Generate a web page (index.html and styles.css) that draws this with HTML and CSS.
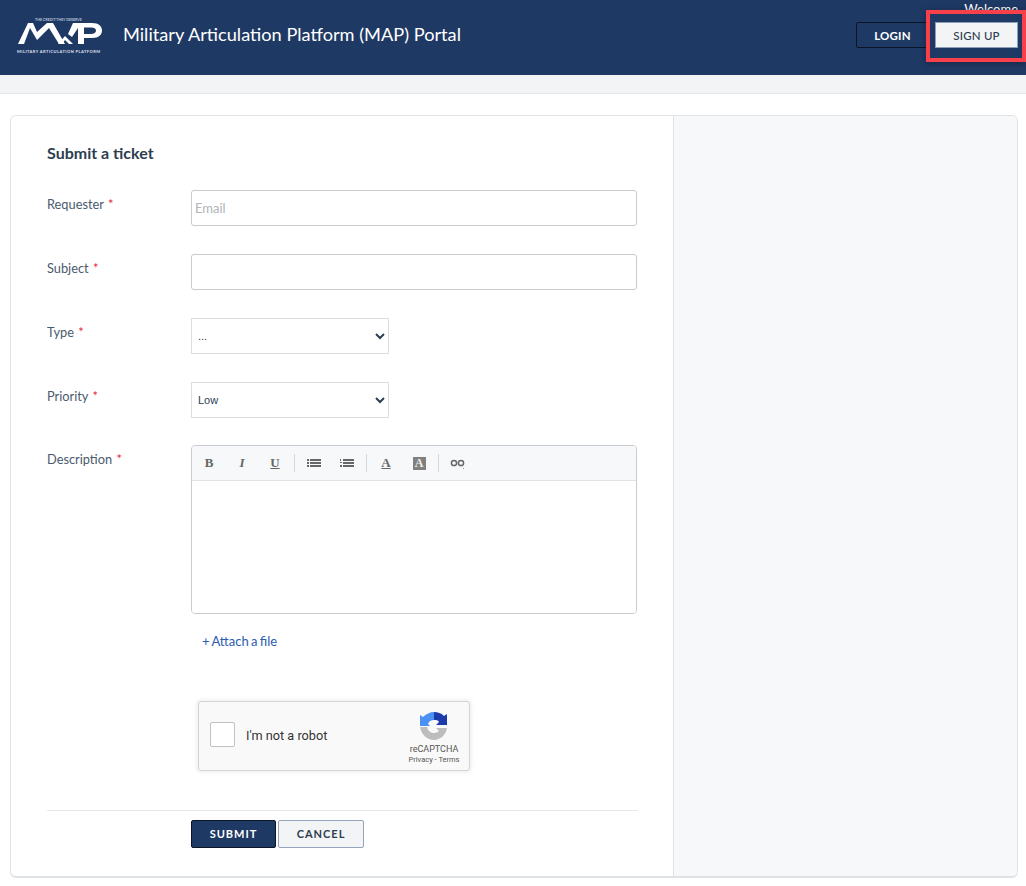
FILE: index.html
```html
<!DOCTYPE html>
<html lang="en">
<head>
    <meta charset="UTF-8">
    <title>Submit a ticket</title>
    <link rel="stylesheet" href="styles.css">
</head>
<body>
    <header class="topbar">
        <div class="brand">
            <div class="logo">
                <span class="logo-top">THE CREDIT THEY DESERVE</span>
                <svg class="logo-mark" width="86" height="24" viewBox="0 0 86 24">
                    <path fill="#fff" d="M0 21 10 0h5l4 9 10-9h6l12 21h-6L31 5 19 17 12 5 6 21z"/>
                    <path fill="#fff" d="M40 21l7-8 8 8h-4l-4-4-3 4z"/>
                    <path fill="#fff" d="M50 11l5-11h5v5l-6 9z"/>
                    <path fill="#fff" fill-rule="evenodd" d="M60 0h14c7 0 10 3.500 10 7.500S81 15 74 15h-8v6h-6zM66 4.500V11h7c3 0 5-1.500 5-3.500S76 4.500 73 4.500z"/>
                </svg>
                <span class="logo-bottom">MILITARY ARTICULATION PLATFORM</span>
            </div>
            <span class="portal-title">Military Articulation Platform (MAP) Portal</span>
        </div>
        <div class="auth">
            <span class="welcome">Welcome</span>
            <a class="btn-login">LOGIN</a>
            <a class="btn-signup">SIGN UP</a>
        </div>
        <div class="highlight"></div>
    </header>
    <div class="strip"></div>

    <main class="page">
        <div class="card">
            <form class="ticket-form">
                <h1>Submit a ticket</h1>

                <div class="row">
                    <label>Requester <span class="req">*</span></label>
                    <input class="field" type="text" placeholder="Email">
                </div>
                <div class="row">
                    <label>Subject <span class="req">*</span></label>
                    <input class="field" type="text">
                </div>
                <div class="row">
                    <label>Type <span class="req">*</span></label>
                    <select class="pick"><option>...</option></select>
                </div>
                <div class="row">
                    <label>Priority <span class="req">*</span></label>
                    <select class="pick"><option>Low</option></select>
                </div>
                <div class="row row-desc">
                    <label>Description <span class="req">*</span></label>
                    <div class="editor">
                        <div class="toolbar">
                            <span class="tool tool-b">B</span>
                            <span class="tool tool-i">I</span>
                            <span class="tool tool-u">U</span>
                            <span class="sep"></span>
                            <span class="tool">
                                <svg width="14" height="10" viewBox="0 0 14 10"><path fill="#666" d="M0 1h2v2H0zM3 1h11v2H3zM0 4h2v2H0zM3 4h11v2H3zM0 7h2v2H0zM3 7h11v2H3z"/></svg>
                            </span>
                            <span class="tool">
                                <svg width="14" height="10" viewBox="0 0 14 10"><path fill="#666" d="M0 1h1v2H0zM0 4h2v1H0zM0 7h2v2H0zM3 1h11v2H3zM3 4h11v2H3zM3 7h11v2H3z"/></svg>
                            </span>
                            <span class="sep"></span>
                            <span class="tool tool-color">A</span>
                            <span class="tool"><span class="tool-bg">A</span></span>
                            <span class="sep"></span>
                            <span class="tool">
                                <svg width="16" height="12" viewBox="0 0 16 12"><circle cx="4" cy="6" r="2.6" fill="none" stroke="#666" stroke-width="1.5"/><circle cx="11" cy="6" r="2.6" fill="none" stroke="#666" stroke-width="1.5"/><path fill="#999" d="M13 11h1v1h-1z"/></svg>
                            </span>
                        </div>
                        <div class="editor-body"></div>
                    </div>
                </div>

                <a class="attach">+ Attach a file</a>

                <div class="captcha">
                    <span class="captcha-box"></span>
                    <span class="captcha-text">I'm not a robot</span>
                    <div class="captcha-brand">
                        <svg width="28" height="28" viewBox="0 0 28 28">
                            <path fill="#4a90f5" d="M14 0v8c-3 0-5 1-6 4l2 2H0V3l3 2c3-3 7-5 11-5z"/>
                            <path fill="#1c3aa9" d="M14 0c4 0 7 1 10 4l3-2v11H16l3-3c-1-2-3-2-5-2z"/>
                            <path fill="#bdbdbd" d="M0 15h7c1 4 4 6 7 6 2 0 4-1 5-2l-3-3h11c-1 7-7 12-13 12C7 28 1 22 0 15z"/>
                        </svg>
                        <span class="captcha-name">reCAPTCHA</span>
                        <span class="captcha-links">Privacy - Terms</span>
                    </div>
                </div>

                <div class="actions">
                    <button class="btn-submit" type="button">SUBMIT</button>
                    <button class="btn-cancel" type="button">CANCEL</button>
                </div>
            </form>
            <aside class="side"></aside>
        </div>
    </main>
</body>
</html>
```

FILE: styles.css
```css
* {
    box-sizing: border-box;
}
body {
    margin: 0;
    font-family: 'Lato', sans-serif;
    background: #fff;
    color: #2c3e50;
    overflow: hidden;
}
.topbar {
    position: relative;
    height: 75px;
    background: #1f3965;
    display: flex;
    justify-content: space-between;
    align-items: flex-start;
    padding: 0 8px 0 16px;
    color: #fff;
}
.brand {
    display: flex;
    align-items: center;
    height: 68px;
}
.logo {
    width: 107px;
    display: flex;
    flex-direction: column;
    align-items: flex-start;
    padding: 3px 0 0 1px;
}
.logo-top {
    font-size: 3.6px;
    font-weight: 700;
    color: #b9c3d6;
    padding-left: 18px;
    line-height: 5px;
    white-space: nowrap;
}
.logo-mark {
    margin: 1px 0 2px 1px;
}
.logo-bottom {
    font-size: 4px;
    font-weight: 900;
    color: #d5dbe6;
    letter-spacing: 0.43px;
    line-height: 5px;
    white-space: nowrap;
}
.portal-title {
    font-size: 18.2px;
}
.auth {
    position: relative;
    display: flex;
    gap: 6px;
    padding-top: 22px;
}
.welcome {
    position: absolute;
    right: 0;
    top: 1px;
    font-size: 13px;
    line-height: 17px;
}
.btn-login,
.btn-signup {
    height: 26px;
    display: flex;
    align-items: center;
    justify-content: center;
    font-size: 11.5px;
    font-weight: 700;
    letter-spacing: 0.2px;
}
.btn-login {
    width: 73px;
    border: 1px solid #0b1526;
    border-radius: 2px;
}
.btn-signup {
    width: 83px;
    background: #f3f4f6;
    border: 1px solid #8f9fb8;
    color: #2c3e50;
    font-weight: 500;
}
.highlight {
    position: absolute;
    left: 926px;
    top: 10px;
    width: 100px;
    height: 52px;
    border: 4px solid #f8404a;
    box-shadow: 0 1px 6px rgba(0, 0, 0, 0.35);
}
.strip {
    height: 19px;
    background: #f3f4f6;
    border-bottom: 1px solid #e6e8eb;
}
.page {
    padding: 21px 8px 0 10px;
}
.card {
    display: flex;
    height: 763px;
    border: 1px solid #dfe2e6;
    border-bottom-width: 2px;
    border-radius: 6px;
    overflow: hidden;
}
.ticket-form {
    width: 662px;
    padding: 27px 35px 0 36px;
}
.side {
    flex: 1;
    background: #f7f8fa;
    border-left: 1px solid #dfe2e6;
}
h1 {
    font-size: 16px;
    font-weight: 700;
    line-height: 20px;
    margin: 0 0 27px;
    color: #2c3e50;
}
.row {
    display: flex;
    align-items: flex-start;
    height: 64px;
}
.row label {
    width: 144px;
    flex: none;
    font-size: 12.8px;
    line-height: 17px;
    padding-top: 6px;
    color: #4a5a6c;
}
.req {
    color: #e0253a;
    margin-left: 1px;
}
.field {
    width: 446px;
    height: 36px;
    border: 1px solid #c8cbcf;
    border-radius: 3px;
    padding: 0 3px 1px;
    font-family: 'Lato', sans-serif;
    font-size: 13px;
}
.field::placeholder {
    color: #b0b3b8;
}
.pick {
    width: 198px;
    height: 36px;
    border: 1px solid #dadde1;
    background: #fff;
    font-family: 'Liberation Sans', sans-serif;
    font-size: 11px;
    color: #2c3e50;
    padding-left: 2px;
}
.row-desc {
    height: auto;
    margin-top: -1px;
}
.editor {
    width: 446px;
    height: 169px;
    border: 1px solid #c8cbcf;
    border-radius: 4px;
    overflow: hidden;
}
.toolbar {
    height: 35px;
    background: #f7f8fa;
    border-bottom: 1px solid #dfe2e6;
    display: flex;
    align-items: center;
    padding-left: 0.5px;
}
.tool {
    width: 33px;
    display: flex;
    justify-content: center;
    font-family: 'Liberation Serif', serif;
    font-size: 13px;
    color: #666;
}
.tool-b {
    font-weight: 700;
}
.tool-i {
    font-style: italic;
    font-weight: 700;
}
.tool-u,
.tool-color {
    font-weight: 700;
    text-decoration: underline;
}
.tool-bg {
    width: 13px;
    height: 13px;
    background: #808080;
    color: #eee;
    font-weight: 700;
    font-size: 12px;
    line-height: 13px;
    text-align: center;
}
.sep {
    width: 1px;
    height: 18px;
    margin: 0 2.5px;
    background: #d5d8dc;
}
.editor-body {
    height: 133px;
    background: #fff;
}
.attach {
    display: block;
    margin: 18px 0 0 155px;
    font-size: 13px;
    line-height: 19px;
    word-spacing: -1px;
    color: #2a5db0;
}
.captcha {
    width: 272px;
    height: 70px;
    margin: 50px 0 0 151px;
    padding: 0 0 4px 11px;
    background: #f9f9f9;
    border: 1px solid #d3d3d3;
    border-radius: 3px;
    box-shadow: 0 0 4px 1px rgba(0, 0, 0, 0.08);
    display: flex;
    align-items: center;
    position: relative;
    font-family: 'Roboto', sans-serif;
}
.captcha-box {
    width: 25px;
    height: 25px;
    background: #fff;
    border: 1px solid #c1c1c1;
    border-radius: 2px;
}
.captcha-text {
    font-size: 12.7px;
    margin: 2px 0 0 11px;
    color: #333;
}
.captcha-brand {
    position: absolute;
    right: 10px;
    top: 10px;
    width: 50px;
    display: flex;
    flex-direction: column;
    align-items: center;
}
.captcha-name {
    font-size: 9px;
    line-height: 12px;
    color: #555;
    margin-top: 3px;
}
.captcha-links {
    font-size: 7.5px;
    line-height: 10px;
    color: #555;
    white-space: nowrap;
}
.actions {
    margin-top: 39px;
    width: 591px;
    border-top: 1px solid #e6e8eb;
    padding: 9px 0 0 144px;
    display: flex;
    gap: 2px;
}
.actions button {
    height: 28px;
    font-family: 'Lato', sans-serif;
    font-size: 11px;
    font-weight: 700;
    letter-spacing: 1px;
    border-radius: 2px;
    padding: 0 0 2px;
}
.btn-submit {
    width: 85px;
    background: #1f3965;
    color: #fff;
    border: 1px solid #0b1526;
}
.btn-cancel {
    width: 86px;
    background: #f3f4f6;
    color: #2c3e50;
    border: 1px solid #94a4bc;
    font-weight: 500;
}
```
